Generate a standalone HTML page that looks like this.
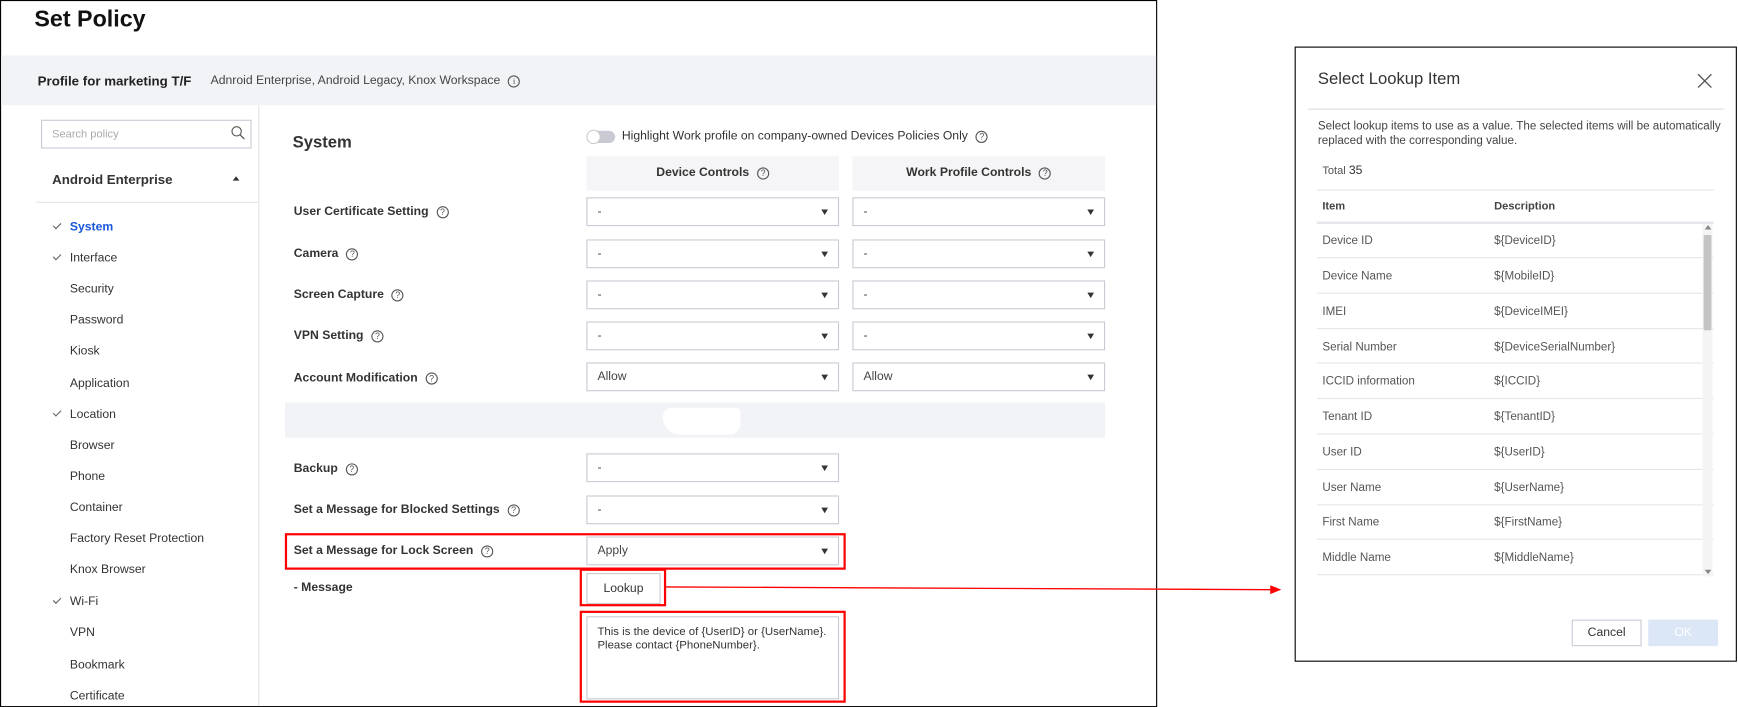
<!DOCTYPE html>
<html><head><meta charset="utf-8">
<style>
*{box-sizing:border-box;margin:0;padding:0}
body{width:1738px;height:707px;background:#fff;font-family:"Liberation Sans",Arial,sans-serif;color:#222;position:relative;overflow:hidden}
#w{position:absolute;left:0;top:0;width:1568px;height:638px;transform:scale(1.10842);transform-origin:0 0}
.a{position:absolute;white-space:nowrap}
.q{display:inline-block;width:11px;height:11px;border:1px solid #555;border-radius:50%;font-size:8px;line-height:9px;text-align:center;color:#555;vertical-align:middle;margin-left:4px;font-weight:normal}
.lbl{font-size:11px;font-weight:bold;color:#333;left:265px;transform:translateY(-50%)}
.sel{position:absolute;width:228px;height:26px;border:1px solid #c9cad3;background:#fff;font-size:11px;color:#444;padding:6px 9px}
.sel:after{content:"";position:absolute;right:9px;top:10px;border-left:3.5px solid transparent;border-right:3.5px solid transparent;border-top:5px solid #333}
.side{font-size:11px;color:#333;left:63px;transform:translateY(-50%)}
.chk{left:48px;width:7px;height:4px;border-left:1px solid #666;border-bottom:1px solid #666;transform:rotate(-45deg)}
.red{position:absolute;border:2.5px solid #f00}
.mrow{position:absolute;left:1188px;width:357px;font-size:10.5px;color:#555;transform:translateY(-50%)}
.mrow span{position:absolute;left:160px}
.hl{position:absolute;left:1188px;width:358px;height:1px;background:#e4e5ea}
</style></head><body><div id="w">
<div class="a" style="left:0;top:0;width:1044px;height:638px;border:1px solid #000"></div>
<div class="a" style="left:31px;top:6px;font-size:21px;font-weight:bold;color:#111">Set Policy</div>
<div class="a" style="left:1px;top:50px;width:1042px;height:45px;background:#f2f3f6"></div>
<div class="a" style="left:34px;top:66px;font-size:12px;font-weight:bold;color:#222">Profile for marketing T/F</div>
<div class="a" style="left:190px;top:67px;font-size:11px;color:#444">Adnroid Enterprise, Android Legacy, Knox Workspace <span class="q" style="font-family:'Liberation Serif';font-size:8px">i</span></div>
<div class="a" style="left:233px;top:95px;width:1px;height:542px;background:#e3e4e8"></div>
<div class="a" style="left:37px;top:108px;width:190px;height:26px;border:1px solid #c9cad3;font-size:10px;color:#aaa;padding:7px 9px">Search policy</div>
<svg class="a" style="left:208px;top:113px" width="14" height="14" viewBox="0 0 14 14"><circle cx="5.5" cy="5.5" r="4.2" fill="none" stroke="#555" stroke-width="1"/><path d="M8.5 8.5L12.5 12.5" stroke="#555" stroke-width="1.1"/></svg>
<div class="a" style="left:47px;top:155px;font-size:12px;font-weight:bold;color:#333">Android Enterprise</div>
<div class="a" style="left:210px;top:159px;border-left:3.5px solid transparent;border-right:3.5px solid transparent;border-bottom:4.5px solid #333"></div>
<div class="a" style="left:33px;top:182px;width:200px;height:1px;background:#e3e4e8"></div>
<div class="a side" style="top:205px;color:#1a56db;font-weight:bold">System</div>
<div class="a side" style="top:233px">Interface</div>
<div class="a side" style="top:261px">Security</div>
<div class="a side" style="top:289px">Password</div>
<div class="a side" style="top:317px">Kiosk</div>
<div class="a side" style="top:346px">Application</div>
<div class="a side" style="top:374px">Location</div>
<div class="a side" style="top:402px">Browser</div>
<div class="a side" style="top:430px">Phone</div>
<div class="a side" style="top:458px">Container</div>
<div class="a side" style="top:486px">Factory Reset Protection</div>
<div class="a side" style="top:514px">Knox Browser</div>
<div class="a side" style="top:543px">Wi-Fi</div>
<div class="a side" style="top:571px">VPN</div>
<div class="a side" style="top:600px">Bookmark</div>
<div class="a side" style="top:628px">Certificate</div>
<div class="a chk" style="top:201px"></div>
<div class="a chk" style="top:229px"></div>
<div class="a chk" style="top:370px"></div>
<div class="a chk" style="top:539px"></div>
<div class="a" style="left:264px;top:120px;font-size:15px;font-weight:bold;color:#333">System</div>
<div class="a" style="left:529px;top:118px;width:26px;height:11px;border-radius:6px;background:#c9cad3"></div>
<div class="a" style="left:529px;top:117px;width:13px;height:13px;border-radius:50%;background:#fff;border:1px solid #ccc"></div>
<div class="a" style="left:561px;top:117px;font-size:11px;color:#333">Highlight Work profile on company-owned Devices Policies Only <span class="q">?</span></div>
<div class="a" style="left:529px;top:141px;width:228px;height:31px;background:#f5f5f7;text-align:center;font-size:11px;font-weight:bold;line-height:31px;color:#333">Device Controls <span class="q">?</span></div>
<div class="a" style="left:769px;top:141px;width:228px;height:31px;background:#f5f5f7;text-align:center;font-size:11px;font-weight:bold;line-height:31px;color:#333">Work Profile Controls <span class="q">?</span></div>
<div class="a lbl" style="top:191px">User Certificate Setting <span class="q">?</span></div>
<div class="sel" style="left:529px;top:178px">-</div><div class="sel" style="left:769px;top:178px">-</div>
<div class="a lbl" style="top:229px">Camera <span class="q">?</span></div>
<div class="sel" style="left:529px;top:216px">-</div><div class="sel" style="left:769px;top:216px">-</div>
<div class="a lbl" style="top:266px">Screen Capture <span class="q">?</span></div>
<div class="sel" style="left:529px;top:253px">-</div><div class="sel" style="left:769px;top:253px">-</div>
<div class="a lbl" style="top:303px">VPN Setting <span class="q">?</span></div>
<div class="sel" style="left:529px;top:290px">-</div><div class="sel" style="left:769px;top:290px">-</div>
<div class="a lbl" style="top:341px">Account Modification <span class="q">?</span></div>
<div class="sel" style="left:529px;top:327px">Allow</div><div class="sel" style="left:769px;top:327px">Allow</div>
<div class="a" style="left:257px;top:363px;width:740px;height:32px;background:#f2f3f6"></div>
<div class="a" style="left:598px;top:368px;width:70px;height:24px;background:#fff;border-radius:10px 6px 12px 20px"></div>
<div class="a lbl" style="top:423px">Backup <span class="q">?</span></div>
<div class="sel" style="left:529px;top:409px">-</div>
<div class="a lbl" style="top:460px">Set a Message for Blocked Settings <span class="q">?</span></div>
<div class="sel" style="left:529px;top:447px">-</div>
<div class="a lbl" style="top:497px">Set a Message for Lock Screen <span class="q">?</span></div>
<div class="sel" style="left:529px;top:484px">Apply</div>
<div class="red" style="left:257px;top:481px;width:506px;height:33px"></div>
<div class="a lbl" style="top:530px">- Message</div>
<div class="a" style="left:529px;top:517px;width:67px;height:28px;border:1px solid #c9cad3;font-size:11px;color:#333;text-align:center;line-height:26px">Lookup</div>
<div class="red" style="left:523px;top:513px;width:78px;height:34px"></div>
<div class="a" style="left:529px;top:556px;width:228px;height:75px;border:1px solid #c9cad3;font-size:10.3px;color:#333;padding:8px 9px;line-height:12px">This is the device of {UserID} or {UserName}.<br>Please contact {PhoneNumber}.</div>
<div class="red" style="left:523px;top:551px;width:240px;height:83px"></div>
<svg class="a" style="left:600px;top:524px" width="560" height="16"><path d="M0 5.5L548 8" stroke="#f00" stroke-width="1.2"/><path d="M546 4L556 8L546 12Z" fill="#f00"/></svg>
<div class="a" style="left:1168px;top:42px;width:399px;height:555px;border:1px solid #000"></div>
<div class="a" style="left:1189px;top:63px;font-size:15px;color:#333">Select Lookup Item</div>
<svg class="a" style="left:1531px;top:66px" width="14" height="14"><path d="M1 1L13 13M13 1L1 13" stroke="#555" stroke-width="1.2"/></svg>
<div class="a" style="left:1180px;top:98px;width:375px;height:1px;background:#dcdde2"></div>
<div class="a" style="left:1189px;top:108px;font-size:10.5px;color:#444;line-height:13px">Select lookup items to use as a value. The selected items will be automatically<br>replaced with the corresponding value.</div>
<div class="a" style="left:1193px;top:148px;font-size:10px;color:#555">Total <span style="color:#333;font-size:11px">35</span></div>
<div class="hl" style="top:171px"></div>
<div class="a" style="left:1193px;top:181px;font-size:10px;font-weight:bold;color:#444">Item</div>
<div class="a" style="left:1348px;top:181px;font-size:10px;font-weight:bold;color:#444">Description</div>
<div class="hl" style="top:200px;height:2px"></div>
<div class="mrow" style="top:217px;left:1193px">Device ID<span style="left:155px">${DeviceID}</span></div>
<div class="hl" style="top:232px"></div>
<div class="mrow" style="top:249px;left:1193px">Device Name<span style="left:155px">${MobileID}</span></div>
<div class="hl" style="top:264px"></div>
<div class="mrow" style="top:281px;left:1193px">IMEI<span style="left:155px">${DeviceIMEI}</span></div>
<div class="hl" style="top:296px"></div>
<div class="mrow" style="top:313px;left:1193px">Serial Number<span style="left:155px">${DeviceSerialNumber}</span></div>
<div class="hl" style="top:327px"></div>
<div class="mrow" style="top:344px;left:1193px">ICCID information<span style="left:155px">${ICCID}</span></div>
<div class="hl" style="top:359px"></div>
<div class="mrow" style="top:376px;left:1193px">Tenant ID<span style="left:155px">${TenantID}</span></div>
<div class="hl" style="top:391px"></div>
<div class="mrow" style="top:408px;left:1193px">User ID<span style="left:155px">${UserID}</span></div>
<div class="hl" style="top:423px"></div>
<div class="mrow" style="top:440px;left:1193px">User Name<span style="left:155px">${UserName}</span></div>
<div class="hl" style="top:455px"></div>
<div class="mrow" style="top:471px;left:1193px">First Name<span style="left:155px">${FirstName}</span></div>
<div class="hl" style="top:486px"></div>
<div class="mrow" style="top:503px;left:1193px">Middle Name<span style="left:155px">${MiddleName}</span></div>
<div class="hl" style="top:518px"></div>
<div class="a" style="left:1536px;top:202px;width:9px;height:318px;background:#f4f4f4"></div>
<div class="a" style="left:1537px;top:212px;width:7px;height:86px;background:#c4c4c4"></div>
<div class="a" style="left:1538px;top:203px;border-left:3px solid transparent;border-right:3px solid transparent;border-bottom:4px solid #888"></div>
<div class="a" style="left:1538px;top:514px;border-left:3px solid transparent;border-right:3px solid transparent;border-top:4px solid #888"></div>
<div class="a" style="left:1418px;top:559px;width:63px;height:24px;border:1px solid #c9cad3;font-size:11px;color:#333;text-align:center;line-height:22px">Cancel</div>
<div class="a" style="left:1487px;top:559px;width:63px;height:24px;background:#dbe7f7;font-size:11px;color:#fff;text-align:center;line-height:24px">OK</div>
</div></body></html>
